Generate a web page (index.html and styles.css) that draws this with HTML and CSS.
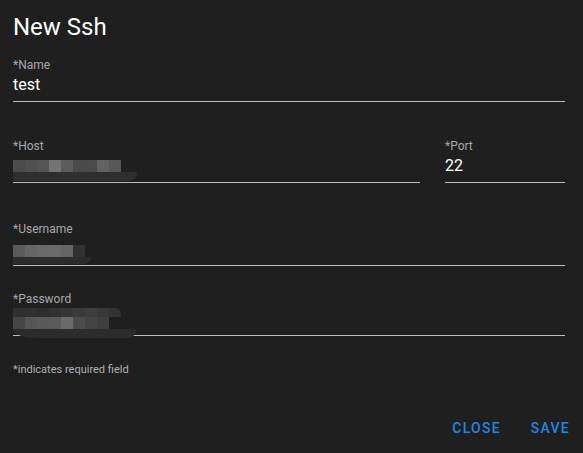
FILE: index.html
```html
<!DOCTYPE html>
<html>
<head>
<meta charset="utf-8">
<link rel="stylesheet" href="styles.css">
</head>
<body>
<div class="dialog">
  <h2 class="title">New Ssh</h2>
  <div class="field name-field">
    <div class="label">*Name</div>
    <div class="value">test</div>
  </div>
  <div class="row host-row">
    <div class="field host-field">
      <div class="label">*Host</div>
      <div class="value">
        <div class="blur host-blur">
          <div class="px-row px12"><span class="c4b"></span><span class="c50"></span><span class="c55"></span><span class="c74"></span><span class="c5c"></span><span class="c4a"></span><span class="c4b"></span><span class="c62"></span><span class="c57"></span></div>
          <div class="smear host-smear"></div>
        </div>
      </div>
    </div>
    <div class="field port-field">
      <div class="label">*Port</div>
      <div class="value">22</div>
    </div>
  </div>
  <div class="field user-field">
    <div class="label">*Username</div>
    <div class="value">
      <div class="blur user-blur">
        <div class="px-row px12"><span class="c5a"></span><span class="c65"></span><span class="c69"></span><span class="c6b"></span><span class="c64"></span><span class="c31"></span></div>
        <div class="smear user-smear"></div>
      </div>
    </div>
  </div>
  <div class="field pass-field">
    <div class="label">*Password</div>
    <div class="value">
      <div class="blur pass-blur">
        <div class="px-row px9"><span class="c2f"></span><span class="c30"></span><span class="c2d"></span><span class="c32"></span><span class="c36"></span><span class="c3a"></span><span class="c3e"></span><span class="c38"></span><span class="c33 tail"></span></div>
        <div class="px-row px12"><span class="c45"></span><span class="c55"></span><span class="c59"></span><span class="c5b"></span><span class="c6a"></span><span class="c4c"></span><span class="c44"></span><span class="c3e"></span></div>
        <div class="smear pass-smear"></div>
      </div>
    </div>
  </div>
  <div class="helper">*indicates required field</div>
  <div class="actions">
    <button class="btn">Close</button>
    <button class="btn">Save</button>
  </div>
</div>
</body>
</html>
```

FILE: styles.css
```css
html, body {
  margin: 0;
  padding: 0;
  background: #1f1f1f;
}
body {
  width: 583px;
  height: 453px;
  overflow: hidden;
  font-family: Roboto, "Liberation Sans", sans-serif;
  color: #ffffff;
}
.dialog {
  padding: 11px 18px 0 13px;
}
.title {
  margin: 0;
  font-size: 24px;
  font-weight: 400;
  line-height: 32px;
  height: 32px;
}
.field {
  display: flex;
  flex-direction: column;
  border-bottom: 1px solid #bdbdbd;
}
.label {
  font-size: 12px;
  line-height: 16px;
  color: #a8a8a8;
}
.value {
  font-size: 16px;
  line-height: 24px;
  height: 24px;
  padding-bottom: 4px;
  color: #ffffff;
}
.name-field {
  margin-top: 14px;
}
.row {
  display: flex;
  gap: 25px;
  margin-top: 36px;
}
.host-field {
  flex: 1;
}
.port-field {
  width: 120px;
}
.user-field {
  margin-top: 38px;
}
.pass-field {
  margin-top: 25px;
}
.blur {
  display: flex;
  flex-direction: column;
}
.host-blur {
  margin-top: 6px;
}
.user-blur {
  margin-top: 8px;
}
.pass-blur {
  margin-top: 1px;
}
.px-row {
  display: flex;
}
.px-row span {
  width: 12px;
}
.px12 { height: 12px; }
.px9 { height: 9px; }
.tail {
  border-radius: 0 6px 0 0;
}
.smear {
  background: #2c2c2c;
  border-radius: 0 0 8px 2px;
}
.host-smear { width: 124px; height: 9px; background: #2f2f2f; }
.user-smear { width: 78px; height: 7px; }
.pass-smear {
  width: 123px;
  height: 9px;
  border-radius: 0 0 8px 26px / 0 0 8px 8px;
}

.c2d { background: #2d2d2d; }
.c2f { background: #2f2f2f; }
.c30 { background: #303030; }
.c31 { background: #313131; }
.c32 { background: #323232; }
.c33 { background: #333333; }
.c36 { background: #363636; }
.c38 { background: #383838; }
.c3a { background: #3a3a3a; }
.c3e { background: #3e3e3e; }
.c44 { background: #444444; }
.c45 { background: #454545; }
.c4a { background: #4a4a4a; }
.c4b { background: #4b4b4b; }
.c4c { background: #4c4c4c; }
.c50 { background: #505050; }
.c55 { background: #555555; }
.c57 { background: #575757; }
.c59 { background: #595959; }
.c5a { background: #5a5a5a; }
.c5b { background: #5b5b5b; }
.c5c { background: #5c5c5c; }
.c62 { background: #626262; }
.c64 { background: #646464; }
.c65 { background: #656565; }
.c69 { background: #696969; }
.c6a { background: #6a6a6a; }
.c6b { background: #6b6b6b; }
.c74 { background: #747474; }

.helper {
  margin-top: 27px;
  font-size: 11px;
  line-height: 14px;
  color: #b0b0b0;
}
.actions {
  display: flex;
  justify-content: flex-end;
  gap: 14px;
  margin-top: 35px;
  margin-right: -13px;
}
.btn {
  background: none;
  border: none;
  padding: 6px 8px;
  font-family: Roboto, "Liberation Sans", sans-serif;
  font-size: 14px;
  font-weight: 500;
  letter-spacing: 1.25px;
  text-transform: uppercase;
  color: #1e88e5;
  line-height: 20px;
}
```
